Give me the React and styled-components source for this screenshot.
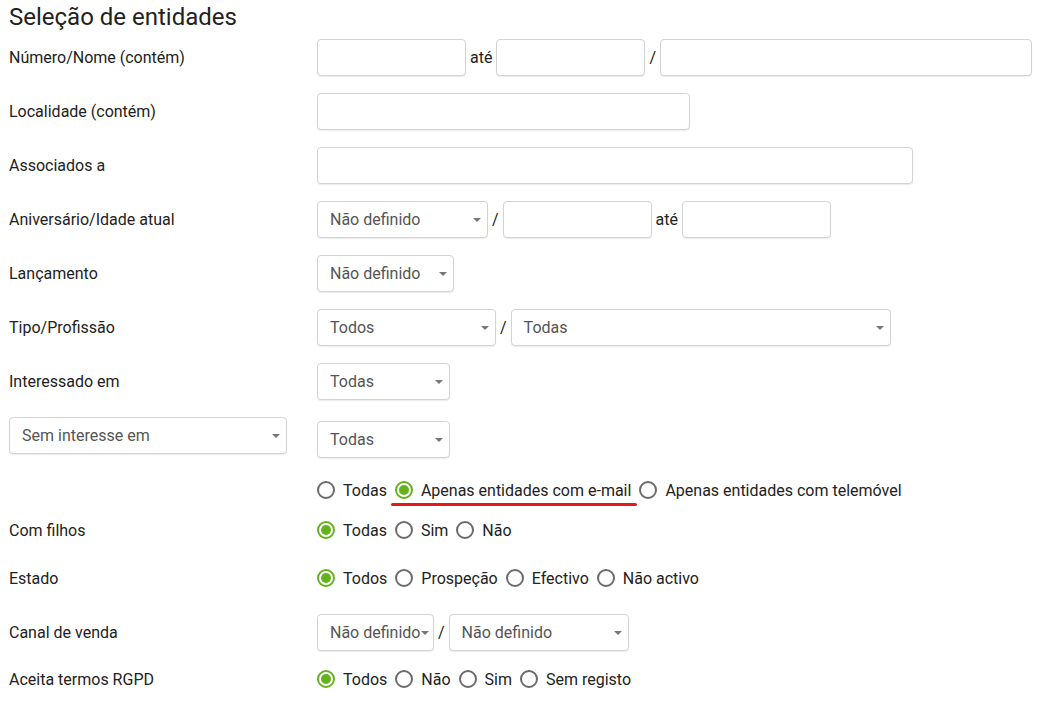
import styled, { createGlobalStyle } from 'styled-components';

const GlobalStyle = createGlobalStyle`
  body {
    margin: 0;
    background: #fff;
    font-family: Roboto, "Liberation Sans", sans-serif;
    color: #222;
  }
`;

const Page = styled.div`
  display: flex;
  flex-direction: column;
  padding: 4px 9px 0;
`;

const Title = styled.h1`
  margin: 0 0 8px;
  font-size: 24px;
  line-height: 27px;
  font-weight: 400;
  color: #222;
`;

const Row = styled.div`
  display: grid;
  grid-template-columns: 308px 1fr;
  align-items: ${(p) => p.$align || 'center'};
  height: ${(p) => p.$h}px;
  margin-top: ${(p) => p.$mt || 0}px;
`;

const Label = styled.div`
  font-size: 16px;
  color: #222;
`;

const Controls = styled.div`
  display: flex;
  align-items: center;
  gap: 4px;
  align-self: ${(p) => p.$self || 'auto'};
`;

const Input = styled.input`
  box-sizing: border-box;
  width: ${(p) => p.$w}px;
  height: 37px;
  border: 1px solid #d3d3d3;
  border-radius: 4px;
  box-shadow: 0 1px 1px rgba(0, 0, 0, 0.08);
  padding: 0 12px;
  font: inherit;
  font-size: 16px;
  outline: none;
`;

const SelectBox = styled.div`
  box-sizing: border-box;
  width: ${(p) => p.$w}px;
  height: 37px;
  display: flex;
  align-items: center;
  justify-content: space-between;
  padding: 0 6px 0 12px;
  border: 1px solid #d3d3d3;
  border-radius: 4px;
  box-shadow: 0 1px 1px rgba(0, 0, 0, 0.08);
  font-size: 16px;
  color: #555;
  background: #fff;
  white-space: nowrap;
  overflow: hidden;

  &::after {
    content: '';
    flex-shrink: 0;
    border-left: 4px solid transparent;
    border-right: 4px solid transparent;
    border-top: 4px solid #777;
    margin-left: 1px;
  }
`;

const Sep = styled.span`
  font-size: 16px;
  color: #222;
`;

const RadioGroup = styled.div`
  display: flex;
  align-items: center;
  gap: 8px;
`;

const Option = styled.label`
  position: relative;
  display: flex;
  align-items: center;
  gap: 8px;
  font-size: 16px;
  color: #222;

  ${(p) =>
    p.$marked &&
    `
    &::after {
      content: '';
      position: absolute;
      left: -4px;
      right: -6px;
      bottom: -6px;
      height: 3px;
      border-radius: 2px;
      background: #e3191c;
    }
  `}
`;

const Dot = styled.span`
  box-sizing: border-box;
  width: 18px;
  height: 18px;
  border-radius: 50%;
  border: 2px solid ${(p) => (p.$on ? '#64b31d' : '#6b6b6b')};
  display: flex;
  align-items: center;
  justify-content: center;

  &::after {
    content: '';
    width: 10px;
    height: 10px;
    border-radius: 50%;
    background: ${(p) => (p.$on ? '#64b31d' : 'transparent')};
  }
`;

function Radios({ options, checked, marked }) {
  return (
    <RadioGroup>
      {options.map((o, i) => (
        <Option key={o} $marked={i === marked}>
          <Dot $on={i === checked} />
          {o}
        </Option>
      ))}
    </RadioGroup>
  );
}

export default function App() {
  return (
    <Page>
      <GlobalStyle />
      <Title>Seleção de entidades</Title>

      <Row $h={37}>
        <Label>Número/Nome (contém)</Label>
        <Controls>
          <Input $w={149} />
          <Sep>até</Sep>
          <Input $w={149} />
          <Sep>/</Sep>
          <Input $w={372} />
        </Controls>
      </Row>

      <Row $h={37} $mt={17}>
        <Label>Localidade (contém)</Label>
        <Controls>
          <Input $w={373} />
        </Controls>
      </Row>

      <Row $h={37} $mt={17}>
        <Label>Associados a</Label>
        <Controls>
          <Input $w={596} />
        </Controls>
      </Row>

      <Row $h={37} $mt={17}>
        <Label>Aniversário/Idade atual</Label>
        <Controls>
          <SelectBox $w={171}>Não definido</SelectBox>
          <Sep>/</Sep>
          <Input $w={149} />
          <Sep>até</Sep>
          <Input $w={149} />
        </Controls>
      </Row>

      <Row $h={37} $mt={17}>
        <Label>Lançamento</Label>
        <Controls>
          <SelectBox $w={137}>Não definido</SelectBox>
        </Controls>
      </Row>

      <Row $h={37} $mt={17}>
        <Label>Tipo/Profissão</Label>
        <Controls>
          <SelectBox $w={179}>Todos</SelectBox>
          <Sep>/</Sep>
          <SelectBox $w={380}>Todas</SelectBox>
        </Controls>
      </Row>

      <Row $h={37} $mt={17}>
        <Label>Interessado em</Label>
        <Controls>
          <SelectBox $w={133}>Todas</SelectBox>
        </Controls>
      </Row>

      <Row $h={41} $mt={17} $align="start">
        <Controls>
          <SelectBox $w={278}>Sem interesse em</SelectBox>
        </Controls>
        <Controls $self="end">
          <SelectBox $w={133}>Todas</SelectBox>
        </Controls>
      </Row>

      <Row $h={20} $mt={22}>
        <span />
        <Radios
          options={['Todas', 'Apenas entidades com e-mail', 'Apenas entidades com telemóvel']}
          checked={1}
          marked={1}
        />
      </Row>

      <Row $h={20} $mt={20}>
        <Label>Com filhos</Label>
        <Radios options={['Todas', 'Sim', 'Não']} checked={0} />
      </Row>

      <Row $h={20} $mt={28}>
        <Label>Estado</Label>
        <Radios options={['Todos', 'Prospeção', 'Efectivo', 'Não activo']} checked={0} />
      </Row>

      <Row $h={37} $mt={26}>
        <Label>Canal de venda</Label>
        <Controls>
          <SelectBox $w={117}>Não definido</SelectBox>
          <Sep>/</Sep>
          <SelectBox $w={180}>Não definido</SelectBox>
        </Controls>
      </Row>

      <Row $h={20} $mt={18}>
        <Label>Aceita termos RGPD</Label>
        <Radios options={['Todos', 'Não', 'Sim', 'Sem registo']} checked={0} />
      </Row>
    </Page>
  );
}
